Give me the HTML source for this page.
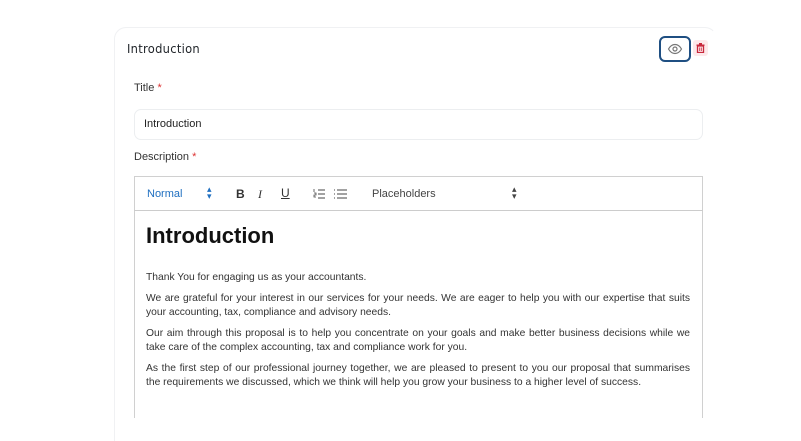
<!DOCTYPE html>
<html><head><style>
html,body{margin:0;width:801px;height:441px;overflow:hidden}
body{background:#fff;font-family:"Liberation Sans",sans-serif;position:relative}
.card{position:absolute;left:114px;top:27px;width:603px;height:430px;border:1px solid #f0f1f3;border-right-color:#fff;border-radius:12px;box-sizing:border-box}
.a{position:absolute}
</style></head><body>
<div class="card"></div>
<div class="a" style="left:127px;top:41px;font-size:12.5px;color:#1f2328;letter-spacing:.3px;font-family:'DejaVu Sans',sans-serif;transform:scaleX(.92);transform-origin:left">Introduction</div>
<div class="a" style="left:659px;top:36px;width:32px;height:26px;border:2px solid #1f4f82;border-radius:6px;box-sizing:border-box"></div>
<svg class="a" style="left:667px;top:42px" width="16" height="14" viewBox="0 0 16 14"><path d="M1.5 7C3.5 3.5 5.5 2.5 8 2.5S12.5 3.5 14.5 7C12.5 10.5 10.5 11.5 8 11.5S3.5 10.5 1.5 7Z" fill="none" stroke="#777" stroke-width="1.2"/><circle cx="8" cy="7" r="2" fill="none" stroke="#777" stroke-width="1.2"/></svg>
<div class="a" style="left:693px;top:40px;width:15px;height:16px;background:#fde8ea;border-radius:3px"></div>
<svg class="a" style="left:696px;top:43px" width="9" height="10" viewBox="0 0 9 10"><rect x="0.5" y="1.5" width="8" height="1.3" fill="#c8283c"/><rect x="3" y="0" width="3" height="1.5" fill="#c8283c"/><path d="M1.5 3H7.5V9.5H1.5Z" fill="none" stroke="#c8283c" stroke-width="1.3"/><path d="M3.7 4.5V8M5.3 4.5V8" stroke="#c8283c" stroke-width=".8"/></svg>
<div class="a" style="left:134px;top:82px;font-size:11px;color:#333">Title <span style="color:#d33">*</span></div>
<div class="a" style="left:134px;top:109px;width:569px;height:31px;border:1px solid #eceef0;border-radius:7px;box-sizing:border-box"></div>
<div class="a" style="left:144px;top:118px;font-size:11px;color:#222">Introduction</div>
<div class="a" style="left:134px;top:151px;font-size:11px;color:#333">Description <span style="color:#d33">*</span></div>
<div class="a" style="left:134px;top:176px;width:569px;height:242px;border:1px solid #d0d0d0;box-sizing:border-box;border-bottom:none"></div>
<div class="a" style="left:134px;top:210px;width:569px;height:1px;background:#ccc"></div>
<div class="a" style="left:147px;top:188px;font-size:11px;color:#1f6fc0">Normal</div>
<div class="a" style="left:207px;top:186px;font-size:9px;color:#1f6fc0;line-height:7px">▴<br>▾</div>
<div class="a" style="left:236px;top:187px;font-size:12px;font-weight:bold;color:#333">B</div>
<div class="a" style="left:258px;top:187px;font-size:12px;font-style:italic;color:#333;font-family:'Liberation Serif'">I</div>
<div class="a" style="left:281px;top:186px;font-size:12px;text-decoration:underline;color:#333">U</div>
<svg class="a" style="left:313px;top:188px" width="34" height="12"><g stroke="#444" stroke-width="1.1"><path d="M5 2H12M5 6H12M5 10H12M24 2H34M24 6H34M24 10H34"/><path d="M1 1V4M1 5H3V7H1V9H3" stroke-width=".8" fill="none"/><path d="M21 2H22M21 6H22M21 10H22"/></g></svg>
<div class="a" style="left:372px;top:188px;font-size:11px;color:#444">Placeholders</div>
<div class="a" style="left:512px;top:186px;font-size:9px;color:#444;line-height:7px">▴<br>▾</div>
<div class="a" style="left:146px;top:223px;font-size:22px;font-weight:bold;color:#111">Introduction</div>
<div class="a" style="left:146px;top:271px;width:544px;font-size:10.3px;line-height:14.5px;color:#333;text-align:justify">
<p style="margin:0 0 6px">Thank You for engaging us as your accountants.</p>
<p style="margin:0 0 6px">We are grateful for your interest in our services for your needs. We are eager to help you with our expertise that suits your accounting, tax, compliance and advisory needs.</p>
<p style="margin:0 0 6px">Our aim through this proposal is to help you concentrate on your goals and make better business decisions while we take care of the complex accounting, tax and compliance work for you.</p>
<p style="margin:0">As the first step of our professional journey together, we are pleased to present to you our proposal that summarises the requirements we discussed, which we think will help you grow your business to a higher level of success.</p>
</div>
</body></html>
